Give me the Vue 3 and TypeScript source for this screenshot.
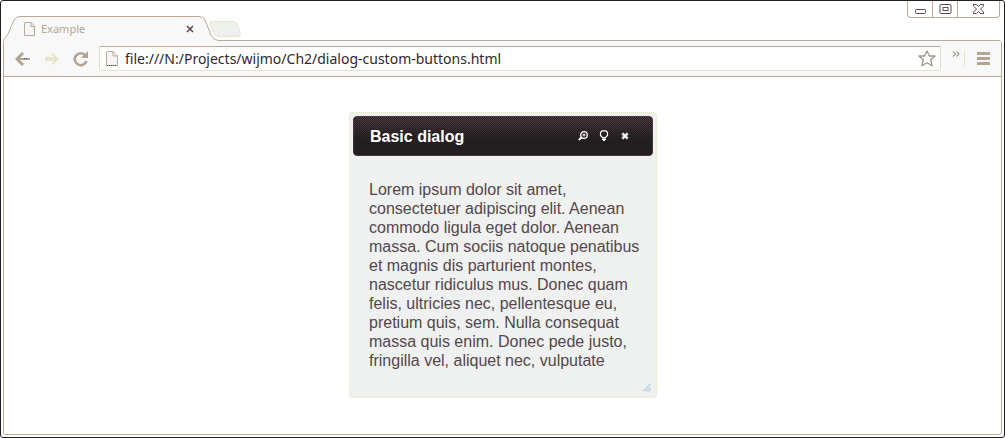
<script setup lang="ts">
import { ref } from 'vue'

const address = ref<string>('file:///N:/Projects/wijmo/Ch2/dialog-custom-buttons.html')
const message: string =
  'Lorem ipsum dolor sit amet, consectetuer adipiscing elit. Aenean commodo ligula eget dolor. ' +
  'Aenean massa. Cum sociis natoque penatibus et magnis dis parturient montes, nascetur ridiculus mus. ' +
  'Donec quam felis, ultricies nec, pellentesque eu, pretium quis, sem. Nulla consequat massa quis enim. ' +
  'Donec pede justo, fringilla vel, aliquet nec, vulputate'
</script>

<template>
  <div class="window">
    <header class="titlebar">
      <div class="tab">
        <svg class="tab-shape" width="242" height="26" viewBox="0 0 242 26" aria-hidden="true">
          <path d="M0 26V24Q3 24 5 20L11 5Q13 1.500 17 1.500H196Q200 1.500 202 5L208 20Q210 24.500 215 25.500H242V26Z" fill="#f8f8f8" />
          <path d="M.5 26Q.5 24 3 22Q4 21 5 19L11 5Q13 1.500 17 1.500H196Q200 1.500 202 5L208 20Q210 24.500 215 25.500H242" fill="none" stroke="#b8aa98" />
          <path d="M208 6.500H230Q233 6.500 234 9L237 17Q238 21.500 235 21.500H216Q212 21.500 211 18L207 9Q206 6.500 208 6.500Z" fill="#eff1ef" stroke="#e9e4c8" />
        </svg>
        <svg class="page-icon" width="12" height="14" viewBox="0 0 12 14" aria-hidden="true">
          <path d="M1 .5H7L10.500 4V13.500H.5V1Z M7 .5V4.500H10.500" fill="#f4f5f4" stroke="#b8aa98" />
        </svg>
        <span class="tab-title">Example</span>
        <button class="tab-close" type="button" aria-label="Close tab">
          <svg width="8" height="8" viewBox="0 0 8 8"><path d="M1 1L7 7M7 1L1 7" stroke="#65464c" stroke-width="1.600" /></svg>
        </button>
      </div>
      <div class="controls">
        <button type="button" aria-label="Minimize">
          <svg width="13" height="11" viewBox="0 0 13 11"><rect x="1.500" y="5.500" width="10" height="4" rx="1" fill="#fff" stroke="#65464c" /></svg>
        </button>
        <button type="button" aria-label="Maximize">
          <svg width="13" height="11" viewBox="0 0 13 11"><rect x="1" y=".5" width="11" height="9" rx="1" fill="#fff" stroke="#65464c" /><rect x="4" y="3.500" width="5" height="3" fill="#fff" stroke="#65464c" /></svg>
        </button>
        <button class="wide" type="button" aria-label="Close">
          <svg width="13" height="11" viewBox="0 0 13 11"><path d="M1.500 .5H4.500L6.500 2.500L8.500 .5H11.500V2L8.500 5L11.500 8V9.500H8.500L6.500 7.500L4.500 9.500H1.500V8L4.500 5L1.500 2Z" fill="#fff" stroke="#65464c" /></svg>
        </button>
      </div>
    </header>

    <div class="frame">
      <nav class="toolbar">
        <button class="nav" type="button" aria-label="Back">
          <svg width="16" height="14" viewBox="0 0 16 14"><path d="M8 1L2 7L8 13" fill="none" stroke="#b3a593" stroke-width="3" /><path d="M3 7H15" stroke="#b3a593" stroke-width="2" /><path d="M9 6.500H13" stroke="#65464c" stroke-dasharray="1 1" /></svg>
        </button>
        <button class="nav" type="button" aria-label="Forward">
          <svg width="16" height="14" viewBox="0 0 16 14"><path d="M8 1.500L13.500 7L8 12.500M1 6H12M1 8H12" fill="none" stroke="#e3debf" stroke-width="1.300" /></svg>
        </button>
        <button class="nav" type="button" aria-label="Reload">
          <svg width="16" height="16" viewBox="0 0 16 16"><path d="M12.500 4.500A6 6 0 1 0 13.500 10" fill="none" stroke="#b3a593" stroke-width="2.600" /><path d="M15 0V7H8Z" fill="#b3a593" /></svg>
        </button>
        <div class="omnibox">
          <svg class="page-icon" width="12" height="15" viewBox="0 0 12 15" aria-hidden="true">
            <path d="M1 .5H7L11.500 5V14.500H.5V1Z M7 .5V5H11.500" fill="#f4f5f4" stroke="#b8aa98" />
            <path d="M1 14.500H11" stroke="#65464c" stroke-dasharray="1 1" />
          </svg>
          <input v-model="address" type="text" aria-label="Address" spellcheck="false" />
          <button class="star" type="button" aria-label="Bookmark this page">
            <svg width="18" height="17" viewBox="0 0 18 17"><path d="M9 1L11.400 6H17L12.700 9.700L14.200 15.800L9 12.700L3.800 15.800L5.300 9.700L1 6H6.600Z" fill="#fff" stroke="#a3938a" stroke-width="1.300" stroke-linejoin="round" /></svg>
          </button>
        </div>
        <button class="more" type="button" aria-label="More extensions">
          <svg width="8" height="6" viewBox="0 0 8 6"><path d="M1 .5L3.500 3L1 5.500M4.500 .5L7 3L4.500 5.500" fill="none" stroke="#a99a88" stroke-width="1.200" /></svg>
        </button>
        <button class="menu" type="button" aria-label="Menu">
          <svg width="13" height="13" viewBox="0 0 13 13"><path d="M0 1.500H13M0 6.500H13M0 11.500H13" stroke="#b3a593" stroke-width="3" /></svg>
        </button>
      </nav>

      <main class="page">
        <section class="dialog" role="dialog" aria-labelledby="dialog-title">
          <header class="dialog-header">
            <h1 id="dialog-title">Basic dialog</h1>
            <button type="button" aria-label="Zoom">
              <svg width="10" height="10" viewBox="0 0 10 10"><circle cx="6" cy="4" r="3.300" fill="none" stroke="#fff" stroke-width="1.300" /><path d="M4.500 4H7.500M6 2.500V5.500" stroke="#fff" /><path d="M3.500 6.500L.7 9" stroke="#fff" stroke-width="2" /></svg>
            </button>
            <button type="button" aria-label="Hint">
              <svg width="10" height="12" viewBox="0 0 10 12"><path d="M3.500 7.500L1.500 5.500V2.500L3 .8H7L8.500 2.500V5.500L6.500 7.500Z" fill="none" stroke="#fff" stroke-width="1.200" /><path d="M3 8.500H7" stroke="#b3a593" /><path d="M3 9.500H7M4 10.500H6" stroke="#fff" /></svg>
            </button>
            <button type="button" aria-label="Close dialog">
              <svg width="8" height="8" viewBox="0 0 8 8"><path d="M1.300 1.300L6.700 6.700M6.700 1.300L1.300 6.700" stroke="#fff" stroke-width="2.400" /></svg>
            </button>
          </header>
          <p>{{ message }}</p>
          <svg class="grip" width="8" height="8" viewBox="0 0 8 8" aria-hidden="true"><path d="M0 7.500L7.500 0M3 7.500L7.500 3M5.500 7.500L7.500 5.500" stroke="#93bbd8" /></svg>
        </section>
      </main>
    </div>
  </div>
</template>

<style>
body {
  margin: 0;
}
</style>

<style scoped>
* {
  box-sizing: border-box;
}
button {
  display: flex;
  align-items: center;
  justify-content: center;
  padding: 0;
  border: 0;
  background: none;
}
svg {
  display: block;
  flex: none;
}
.window {
  display: flex;
  flex-direction: column;
  min-height: 100vh;
  padding: 0 2px 2px;
  border: 1px solid #231f20;
  border-radius: 3px;
  background: #fff;
  font-family: "Noto Sans", "Open Sans", sans-serif;
}
.titlebar {
  display: flex;
  align-items: flex-start;
  justify-content: space-between;
  height: 39px;
}
.tab {
  position: relative;
  z-index: 1;
  display: flex;
  align-items: center;
  width: 242px;
  height: 26px;
  margin-top: 14px;
  padding: 2px 47px 0 21px;
}
.tab-shape {
  position: absolute;
  top: 0;
  left: 0;
}
.page-icon {
  position: relative;
}
.tab-title {
  position: relative;
  flex: 1;
  margin-left: 5px;
  color: #b3a593;
  font-size: 11px;
  line-height: 16px;
}
.tab-close {
  position: relative;
  width: 16px;
  height: 16px;
}
.controls {
  display: flex;
  height: 17px;
  margin-right: 2px;
  border: 1px solid #b8aa98;
  border-top: 0;
  border-radius: 0 0 4px 4px;
}
.controls button {
  width: 24px;
}
.controls button + button {
  width: 25px;
  border-left: 1px solid #b8aa98;
}
.controls button.wide {
  width: 42px;
}
.frame {
  display: flex;
  flex: 1;
  flex-direction: column;
  border: 1px solid #b8aa98;
  border-radius: 3px;
}
.toolbar {
  display: flex;
  align-items: center;
  padding: 5px 0 5px 4px;
  border-bottom: 1px solid #b8aa98;
  background: #f8f8f8;
}
.nav {
  width: 29px;
  height: 25px;
}
.omnibox {
  display: flex;
  flex: 1;
  align-items: center;
  height: 25px;
  margin-left: 4px;
  padding: 0 4px 0 6px;
  border: 1px solid #e6e1c0;
  border-top-color: #b8aa98;
  border-radius: 2px;
  background: #fff;
}
.omnibox input {
  flex: 1;
  min-width: 0;
  height: 23px;
  margin-left: 7px;
  padding: 0;
  border: 0;
  outline: 0;
  background: none;
  color: #30282b;
  font-family: inherit;
  font-size: 14px;
}
.more {
  align-items: flex-start;
  width: 24px;
  height: 17px;
  padding: 1px 0 0 6px;
  border-right: 1px solid #ebe6cb;
}
.menu {
  width: 36px;
  height: 25px;
}
.page {
  flex: 1;
  padding: 35px 16px 35px 17px;
}
.dialog {
  position: relative;
  width: 308px;
  max-width: 100%;
  margin: 0 auto;
  padding: 3px;
  border: 1px dotted #eee7c4;
  border-radius: 4px;
  background: #eff1f0;
  font-family: "Liberation Sans", Arial, sans-serif;
}
.dialog-header {
  position: relative;
  display: flex;
  align-items: center;
  height: 40px;
  padding: 0 17px 0 16px;
  border: 1px solid #4b363b;
  border-radius: 4px;
  background: #231f20;
}
.dialog-header::before {
  position: absolute;
  inset: 0;
  border-radius: 3px;
  background: repeating-conic-gradient(#5c4349 0 25%, #231f20 0 50%) 0 0 / 2px 2px;
  content: "";
  mask-image: linear-gradient(#000, transparent 60%);
}
.dialog-header > * {
  position: relative;
}
.dialog-header h1 {
  flex: 1;
  margin: 0;
  padding-top: 2px;
  color: #fff;
  font-size: 16px;
  line-height: 20px;
}
.dialog-header button {
  width: 21px;
  height: 20px;
}
.dialog p {
  margin: 0;
  padding: 24px 8px 24px 16px;
  color: #53474b;
  font-size: 16px;
  line-height: 19px;
}
.grip {
  position: absolute;
  right: 5px;
  bottom: 5px;
}
</style>
